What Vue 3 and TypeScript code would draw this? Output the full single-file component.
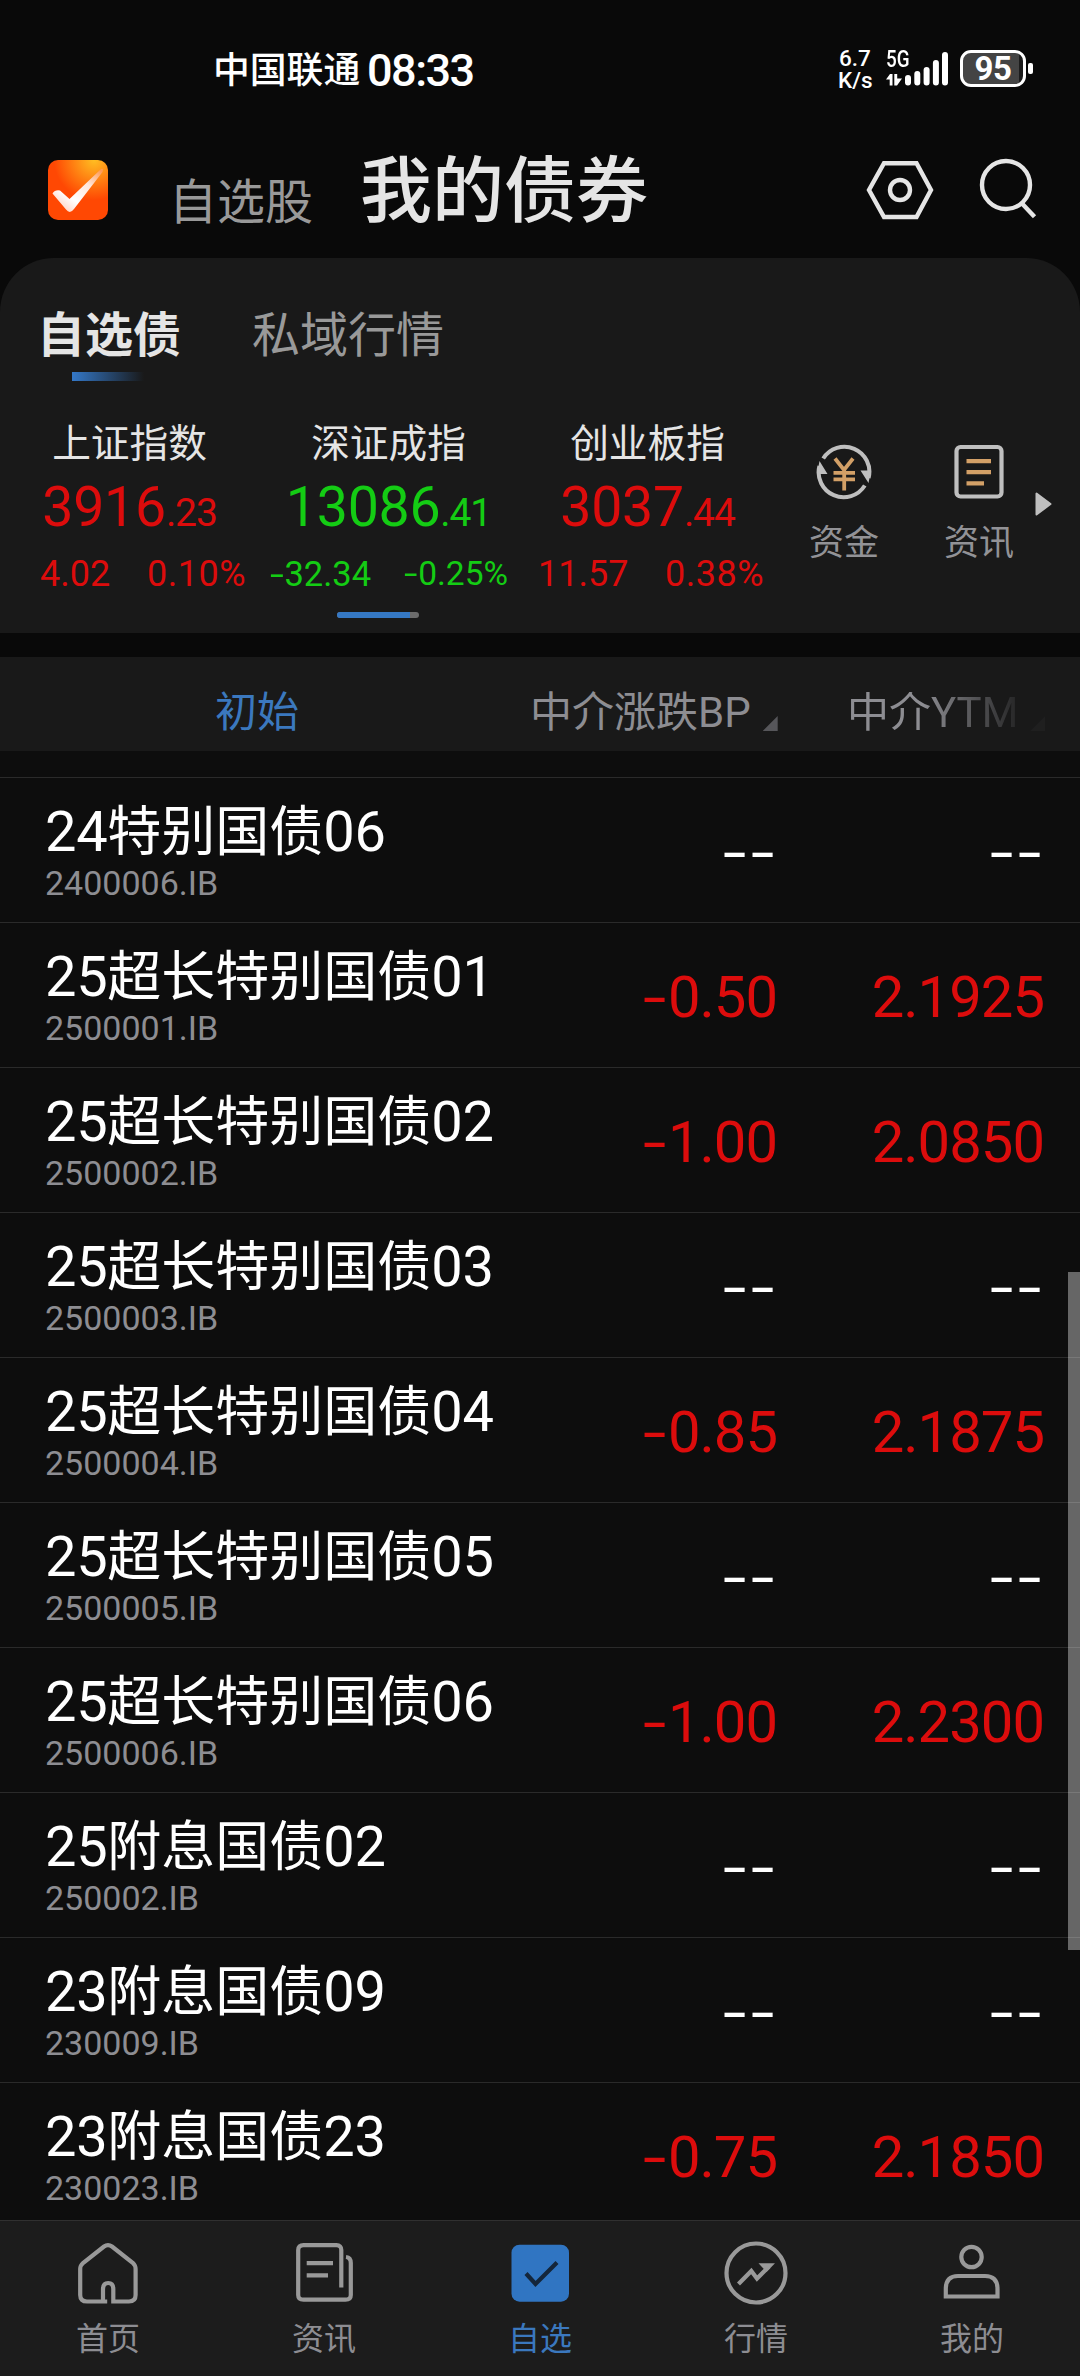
<script setup lang="ts">
interface MarketIndex {
  name: string
  whole: string
  fraction: string
  change: string
  percent: string
  trend: 'up' | 'down'
}

interface Bond {
  name: string
  code: string
  bp: string
  ytm: string
}

const indices: MarketIndex[] = [
  { name: '上证指数', whole: '3916', fraction: '.23', change: '4.02', percent: '0.10%', trend: 'up' },
  { name: '深证成指', whole: '13086', fraction: '.41', change: '-32.34', percent: '-0.25%', trend: 'down' },
  { name: '创业板指', whole: '3037', fraction: '.44', change: '11.57', percent: '0.38%', trend: 'up' },
]

const bonds: Bond[] = [
  { name: '24特别国债06', code: '2400006.IB', bp: '--', ytm: '--' },
  { name: '25超长特别国债01', code: '2500001.IB', bp: '-0.50', ytm: '2.1925' },
  { name: '25超长特别国债02', code: '2500002.IB', bp: '-1.00', ytm: '2.0850' },
  { name: '25超长特别国债03', code: '2500003.IB', bp: '--', ytm: '--' },
  { name: '25超长特别国债04', code: '2500004.IB', bp: '-0.85', ytm: '2.1875' },
  { name: '25超长特别国债05', code: '2500005.IB', bp: '--', ytm: '--' },
  { name: '25超长特别国债06', code: '2500006.IB', bp: '-1.00', ytm: '2.2300' },
  { name: '25附息国债02', code: '250002.IB', bp: '--', ytm: '--' },
  { name: '23附息国债09', code: '230009.IB', bp: '--', ytm: '--' },
  { name: '23附息国债23', code: '230023.IB', bp: '-0.75', ytm: '2.1850' },
]

const tabs = ['首页', '资讯', '自选', '行情', '我的']

// Splits a bond name into its digit and Han runs, which are set at different sizes.
const runs = (s: string): string[] => s.match(/\d+|\D+/g) ?? []
const isHan = (s: string): boolean => !/^\d/.test(s)

// Separates leading dashes from the figure so that they can be widened.
const dashes = (s: string): string[] => (s.match(/^-+/)?.[0] ?? '').split('')
const figure = (s: string): string => s.replace(/^-+/, '')
</script>

<template>
  <div class="screen">
    <div class="status">
      <span class="carrier">中国联通</span>
      <span class="time">08:33</span>
      <div class="speed"><span>6.7</span><span>K/s</span></div>
      <div class="network">
        <span class="gen">5G</span>
        <svg width="16" height="12" viewBox="0 0 16 12" fill="#fff">
          <path d="M0 5.5 4 0H6.5V11.5H3.7V5.5ZM8.3 0H11.2V4.5H16L11 11.5H8.3Z" />
        </svg>
      </div>
      <svg class="signal" width="44" height="34" viewBox="0 0 44 34" stroke="#fff" stroke-width="6" stroke-linecap="round">
        <path d="M4 26V30.5M13.3 22V30.5M22.6 18V30.5M31.9 11V30.5M41 3V30.5" />
      </svg>
      <div class="battery"><span>95</span></div>
      <i class="nub"></i>
    </div>

    <header class="header">
      <svg class="logo" width="60" height="60" viewBox="0 0 60 60">
        <defs>
          <radialGradient id="glow" cx="46" cy="0" r="40" gradientUnits="userSpaceOnUse">
            <stop offset="0" stop-color="#ffbe22" />
            <stop offset="1" stop-color="#ff4803" />
          </radialGradient>
          <linearGradient id="tick" x1="20" y1="52" x2="52" y2="10" gradientUnits="userSpaceOnUse">
            <stop offset="0" stop-color="#ffd9cc" />
            <stop offset=".25" stop-color="#fff" />
            <stop offset=".65" stop-color="#ffe6da" />
            <stop offset="1" stop-color="#ff9a55" />
          </linearGradient>
        </defs>
        <rect width="60" height="60" rx="10" fill="url(#glow)" />
        <path d="M4.500 33.500Q7 29.500 12 30.500L21.500 39L52 10Q56 6.500 54.500 12L26 49Q22 54.500 18 49.500Z" fill="url(#tick)" />
      </svg>
      <span class="book">自选股</span>
      <span class="book current">我的债券</span>
      <svg class="gear" width="68" height="60" viewBox="0 0 68 60" fill="none" stroke="#e5e5e5" stroke-width="4.400">
        <path d="M18 3.200H50.500L65 30L50.500 57H18L3 30Z" />
        <circle cx="34" cy="30" r="10" />
      </svg>
      <svg class="search" width="60" height="62" viewBox="0 0 60 62" fill="none" stroke="#e5e5e5" stroke-width="4.400">
        <circle cx="28" cy="27" r="24" />
        <path d="M44 45.500L56.500 58.800" />
      </svg>
    </header>

    <section class="panel">
      <nav class="lists">
        <span class="on">自选债</span>
        <span>私域行情</span>
      </nav>
      <i class="underline"></i>
      <div class="market">
        <div v-for="m in indices" :key="m.name" class="index" :class="m.trend">
          <div class="label">{{ m.name }}</div>
          <div class="price">{{ m.whole }}<small>{{ m.fraction }}</small></div>
          <div class="change">
            <span><b v-for="(d, i) in dashes(m.change)" :key="i">{{ d }}</b>{{ figure(m.change) }}</span>
            <span class="pct"><b v-for="(d, i) in dashes(m.percent)" :key="i">{{ d }}</b>{{ figure(m.percent) }}</span>
          </div>
        </div>
        <div class="action funds">
          <svg width="56" height="56" viewBox="0 0 56 56" fill="none">
            <g stroke="#bfbfbf" stroke-width="4">
              <path d="M7.200 14.500A25 25 0 0 1 52.600 34" />
              <path d="M48.800 41.500A25 25 0 0 1 3.400 22" />
            </g>
            <path d="M44.500 26.500H55L52.500 39Z M11.500 30H1L3.500 17Z" fill="#bfbfbf" />
            <path d="M19 14.500L28 26L37 14.500M17.500 28.800H39M17.500 35.300H39M28.200 25V46.500" stroke="#d3a067" stroke-width="3.800" />
          </svg>
          <span>资金</span>
        </div>
        <div class="action news">
          <svg width="50" height="56" viewBox="0 0 50 56" fill="none">
            <rect x="2.500" y="3" width="45" height="49.500" rx="4" stroke="#bfbfbf" stroke-width="4.200" />
            <path d="M12.500 17.200H37M12.500 28.200H37M12.500 39.400H30" stroke="#d3a067" stroke-width="4.200" />
          </svg>
          <span>资讯</span>
        </div>
        <svg class="more" width="17" height="24" viewBox="0 0 17 24"><path d="M1.500 1.500V22.500L15.500 12Z" fill="#bfbfbf" stroke="#bfbfbf" stroke-width="2" stroke-linejoin="round" /></svg>
      </div>
      <div class="pager"><i></i></div>
    </section>

    <div class="thead">
      <span class="c-name">初始</span>
      <span class="c-bp">中介涨跌BP<i></i></span>
      <span class="c-ytm">中介YTM<i></i></span>
    </div>

    <main class="rows">
      <div v-for="b in bonds" :key="b.code" class="row">
        <div class="who">
          <div class="name"><span v-for="(r, i) in runs(b.name)" :key="i" :class="{ han: isHan(r) }">{{ r }}</span></div>
          <div class="code">{{ b.code }}</div>
        </div>
        <div class="val bp" :class="{ none: b.bp === '--' }"><b v-for="(d, i) in dashes(b.bp)" :key="i">{{ d }}</b>{{ figure(b.bp) }}</div>
        <div class="val ytm" :class="{ none: b.ytm === '--' }"><b v-for="(d, i) in dashes(b.ytm)" :key="i">{{ d }}</b>{{ figure(b.ytm) }}</div>
      </div>
      <i class="thumb"></i>
    </main>

    <footer class="tabbar">
      <div v-for="(t, i) in tabs" :key="t" class="tab" :class="{ active: i === 2 }">
        <svg width="66" height="66" viewBox="0 0 66 66" fill="none" stroke="#999" stroke-width="4.200">
          <path v-if="i === 0" d="M30.100 62.600V60.500H12Q5.200 60.500 5.200 54V28Q5.200 24.500 8 22L29 5.500Q33 2.700 37 5.500L58 22Q60.600 24.500 60.600 28V54Q60.600 60.500 54 60.500H38.300V48Q38.300 42 33.200 42T28 48V60.500" />
          <template v-if="i === 1">
            <path d="M50.300 46.500V9Q50.300 4.200 45.500 4.200H12.500Q7.200 4.200 7.200 9V54Q7.200 58.700 12.500 58.700H54.500Q59.800 58.700 59.800 54V22Q59.800 16.500 55 16" />
            <path d="M15.700 22.200H42M15.700 34.400H37" />
          </template>
          <template v-if="i === 2">
            <rect x="4.500" y="3.700" width="57.500" height="57" rx="8" fill="#3075c2" stroke="none" />
            <path d="M19 32.500L28.500 43L50 21.500" stroke="#14263b" />
          </template>
          <template v-if="i === 3">
            <circle cx="33" cy="32" r="29.500" />
            <path d="M15.500 43L28.300 30L34 37.500L46 25.500" />
            <path d="M35.500 22.200H52L43.500 31Z" fill="#999" stroke="none" />
          </template>
          <template v-if="i === 4">
            <circle cx="32.500" cy="16" r="10.200" />
            <path d="M6.800 55.500V48Q6.800 35 19 35H46Q58.500 35 58.500 48V55.500Z" />
          </template>
        </svg>
        <span>{{ t }}</span>
      </div>
    </footer>
  </div>
</template>

<style>
body {
  background: #0a0a0a;
}
</style>

<style scoped>
.screen {
  width: 1080px;
  height: 2376px;
  display: flex;
  flex-direction: column;
  overflow: hidden;
  background: #090909;
  color: #e5e5e5;
  font-family: Roboto, 'Noto Sans CJK SC', sans-serif;
  white-space: nowrap;
}
.screen span,
.screen i {
  display: block;
  font-style: normal;
}
svg {
  display: block;
  flex: none;
}

/* status bar */
.status {
  height: 110px;
  flex: none;
  display: flex;
  align-items: flex-start;
  color: #fff;
  font-weight: 500;
}
.carrier {
  margin: 52px 0 0 213px;
  width: 154px;
  font-size: 36.800px;
  line-height: 37px;
}
.time {
  margin-top: 48px;
  width: 471px;
  font-size: 45px;
  line-height: 45px;
  letter-spacing: -1.500px;
}
.speed {
  width: 34px;
  margin-top: 47px;
  font-size: 22.500px;
  line-height: 22px;
  text-align: center;
}
.network {
  width: 24px;
  margin: 48px 0 0 14px;
}
.gen {
  font-size: 23px;
  line-height: 24px;
  transform: scaleX(0.820);
  transform-origin: left;
}
.network svg {
  margin-top: 2px;
}
.signal {
  margin: 52px 0 0 -6px;
}
.battery {
  box-sizing: border-box;
  width: 66px;
  height: 37px;
  margin: 50px 0 0 12px;
  border: 3px solid #fff;
  border-radius: 11px;
  background: linear-gradient(90deg, #444 56px, #1c1c1c 56px);
}
.battery span {
  font-size: 33px;
  line-height: 31px;
  font-weight: 700;
  letter-spacing: -0.500px;
  text-align: center;
}
.nub {
  width: 5px;
  height: 11px;
  margin: 63px 0 0 2px;
  border-radius: 2px;
  background: #fff;
}

/* title bar */
.header {
  height: 148px;
  flex: none;
  display: flex;
  align-items: flex-start;
}
.logo {
  margin: 50px 0 0 48px;
}
.book {
  margin: 69px 0 0 61px;
  font-size: 48px;
  line-height: 48px;
  color: #999;
}
.book.current {
  margin: 46px 0 0 47px;
  font-size: 72px;
  line-height: 72px;
  font-weight: 500;
  color: #e5e5e5;
}
.gear {
  margin: 50px 0 0 218px;
}
.search {
  margin: 48px 0 0 44px;
}

/* index panel */
.panel {
  height: 375px;
  flex: none;
  border-radius: 54px 54px 0 0;
  background: #191919;
}
.lists {
  display: flex;
  gap: 71px;
  padding: 54px 0 0 37px;
  font-size: 48px;
  line-height: 48px;
  color: #999;
}
.lists .on {
  color: #e5e5e5;
  font-weight: 700;
}
.underline {
  width: 72px;
  height: 9px;
  margin: 12px 0 0 72px;
  background: linear-gradient(90deg, #3478c8, #191919);
}
.market {
  display: flex;
  height: 231px;
}
.index {
  width: 259px;
  flex: none;
  padding-top: 43px;
  text-align: center;
}
.up {
  color: #dc0c0c;
}
.down {
  color: #14cc14;
}
.label {
  font-size: 38.700px;
  line-height: 39px;
  color: #e5e5e5;
}
.price {
  margin-top: 17px;
  height: 56px;
  font-size: 55.500px;
  line-height: 56px;
  letter-spacing: -0.300px;
}
.price small {
  font-size: 39px;
  letter-spacing: -1.100px;
}
.change {
  display: flex;
  justify-content: space-between;
  margin: 20px 13px 0 40px;
  font-size: 36px;
  line-height: 36px;
}
.pct {
  letter-spacing: 0.500px;
}
.down .change {
  margin: 20px 10px 0 11px;
  font-size: 34.500px;
}
.down .pct {
  font-size: 33.500px;
  letter-spacing: 0;
}
.index:nth-child(3) .change {
  margin: 20px 13px 0 20px;
}
b {
  display: inline-block;
  font-weight: 400;
  transform: scaleX(1.450);
  transform-origin: left;
  margin-right: 0.140em;
}
.action {
  display: flex;
  flex-direction: column;
  align-items: center;
  width: 72px;
  padding-top: 63px;
  font-size: 35px;
  line-height: 35px;
  color: #929296;
}
.action span {
  margin-top: 26px;
}
.funds {
  margin-left: 31px;
}
.news {
  margin-left: 63px;
}
.more {
  margin: 111px 0 0 20px;
}
.pager {
  width: 82px;
  height: 6px;
  margin: 0 0 0 337px;
  border-radius: 3px;
  overflow: hidden;
  background: #6b6b6b;
}
.pager i {
  width: 73px;
  height: 6px;
  background: #3578c4;
}

/* column titles */
.thead {
  height: 94px;
  margin-top: 24px;
  flex: none;
  display: flex;
  align-items: flex-start;
  background: #191919;
  color: #8d8d92;
  font-size: 42px;
  line-height: 42px;
}
.thead span {
  margin-top: 35px;
}
.thead .c-name {
  width: 315px;
  padding-left: 215px;
  color: #3b78be;
}
.thead .c-bp,
.thead .c-ytm {
  display: flex;
  align-items: flex-start;
}
.c-bp {
  width: 317px;
}
.thead i {
  width: 15px;
  height: 15px;
  margin: 24px 0 0 12px;
  background: #56565a;
  clip-path: polygon(100% 0, 100% 100%, 0 100%);
}
.c-ytm {
  mask-image: linear-gradient(90deg, #000 76px, rgba(0, 0, 0, 0.100) 172px, rgba(0, 0, 0, 0.100));
}

/* bond list */
.rows {
  position: relative;
  flex: 1;
  min-height: 0;
  padding-top: 26px;
  overflow: hidden;
  background: #0d0d0d;
}
.row {
  box-sizing: border-box;
  height: 145px;
  display: flex;
  border-top: 1px solid #2a2a2a;
}
.who {
  width: 460px;
  padding: 26px 0 0 45px;
}
.name {
  height: 56px;
  font-size: 56px;
  line-height: 56px;
  letter-spacing: -0.300px;
  color: #fff;
}
.screen .name span {
  display: inline;
}
.name .han {
  font-size: 54px;
  letter-spacing: 0;
}
.code {
  margin-top: 6px;
  font-size: 34px;
  line-height: 34px;
  color: #8d8d92;
}
.val {
  margin-top: 45px;
  font-size: 58px;
  line-height: 58px;
  text-align: right;
  letter-spacing: -1px;
  color: #dc0c0c;
}
.val.none {
  color: #fff;
}
.val b {
  letter-spacing: 0;
  margin-right: 9px;
}
.val.none b {
  margin-right: 12px;
}
.val.none b:last-child {
  margin-right: 10px;
}
.bp {
  width: 272px;
}
.ytm {
  width: 267px;
}
.thumb {
  position: absolute;
  right: 0;
  top: 521px;
  width: 12px;
  height: 678px;
  background: rgba(255, 255, 255, 0.370);
}

/* bottom navigation */
.tabbar {
  box-sizing: border-box;
  height: 156px;
  flex: none;
  display: flex;
  border-top: 1px solid #303030;
  background: #1c1c1c;
}
.tab {
  flex: 1;
  display: flex;
  flex-direction: column;
  align-items: center;
  padding-top: 20px;
  font-size: 32px;
  line-height: 32px;
  color: #8d8d92;
}
.tab span {
  margin-top: 16px;
}
.tab.active {
  color: #3b78be;
}
</style>
